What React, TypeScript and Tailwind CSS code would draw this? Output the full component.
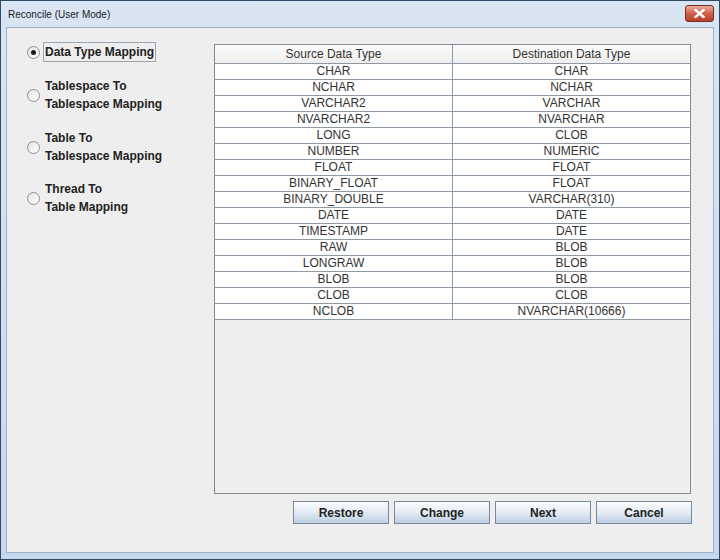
import React from "react";

const rows: [string, string][] = [
  ["CHAR", "CHAR"],
  ["NCHAR", "NCHAR"],
  ["VARCHAR2", "VARCHAR"],
  ["NVARCHAR2", "NVARCHAR"],
  ["LONG", "CLOB"],
  ["NUMBER", "NUMERIC"],
  ["FLOAT", "FLOAT"],
  ["BINARY_FLOAT", "FLOAT"],
  ["BINARY_DOUBLE", "VARCHAR(310)"],
  ["DATE", "DATE"],
  ["TIMESTAMP", "DATE"],
  ["RAW", "BLOB"],
  ["LONGRAW", "BLOB"],
  ["BLOB", "BLOB"],
  ["CLOB", "CLOB"],
  ["NCLOB", "NVARCHAR(10666)"],
];

const options = [
  { lines: ["Data Type Mapping"], selected: true, mt: "mt-[14px]" },
  { lines: ["Tablespace To", "Tablespace Mapping"], selected: false, mt: "mt-[14px]" },
  { lines: ["Table To", "Tablespace Mapping"], selected: false, mt: "mt-[14px]" },
  { lines: ["Thread To", "Table Mapping"], selected: false, mt: "mt-[13px]" },
];

const Radio = ({ checked }: { checked: boolean }) => (
  <div className="w-[13px] h-[13px] rounded-full border border-[#8e8f8f] bg-gradient-to-br from-[#e4e4e4] to-[#ffffff] flex items-center justify-center shrink-0">
    {checked && <div className="w-[5px] h-[5px] rounded-full bg-[#1a1a1a]" />}
  </div>
);

const Button = ({ label }: { label: string }) => (
  <button className="w-[96px] h-[23px] border border-[#7b8896] bg-gradient-to-b from-[#fbfcfe] via-[#e3ebf4] to-[#bccee3] text-[12px] font-bold text-[#222] leading-none">
    {label}
  </button>
);

export default function App() {
  return (
    <div className="w-[720px] h-[560px] flex flex-col border border-[#2f4b66] bg-gradient-to-b from-[#d9e5f3] to-[#c6d8ec] font-['Liberation_Sans',Arial,sans-serif] overflow-hidden">
      {/* title bar */}
      <div className="h-[26px] flex items-start shrink-0 pl-[7px]">
        <span className="mt-[8px] text-[10px] leading-[12px] text-[#1b1b1b]">Reconcile (User Mode)</span>
        <div className="ml-auto mr-[5px] mt-[4px] w-[29px] h-[17px] rounded-[3px] border border-[#7a2a1e] bg-gradient-to-b from-[#eab0a3] via-[#d0604b] to-[#b8412c] flex items-center justify-center">
          <svg width="11" height="9" viewBox="0 0 11 9">
            <path d="M1.5 1 L9.5 8 M9.5 1 L1.5 8" stroke="#ffffff" strokeWidth="2.4" strokeLinecap="square" />
          </svg>
        </div>
      </div>

      {/* content */}
      <div className="flex-1 mx-[5px] mb-[6px] bg-[#eeeeee] border border-[#9fb3c8] flex">
        {/* left radio group */}
        <div className="w-[207px] shrink-0 pl-[20px] flex flex-col">
          {options.map((o, i) => (
            <div key={i} className={`${o.mt} flex items-center gap-[3px]`}>
              <Radio checked={o.selected} />
              <div
                className={`border px-[1px] text-[12px] font-bold leading-[18px] text-[#222] ${
                  o.selected ? "border-[#9aa6b2]" : "border-transparent"
                }`}
              >
                {o.lines.map((l) => (
                  <div key={l}>{l}</div>
                ))}
              </div>
            </div>
          ))}
        </div>

        {/* right: table + buttons */}
        <div className="w-[478px] shrink-0 pt-[16px] flex flex-col">
          <div className="w-[477px] h-[450px] border border-[#7f8b97] bg-[#eeeeee] flex flex-col">
            <div className="flex h-[19px] border-b border-[#8f9aa5] bg-gradient-to-b from-[#fafafa] to-[#eeeeee] text-[12px] leading-[18px] text-[#333]">
              <div className="w-[238px] border-r border-[#8f9aa5] text-center">Source Data Type</div>
              <div className="flex-1 text-center">Destination Data Type</div>
            </div>
            {rows.map(([a, b], i) => (
              <div key={i} className="flex h-[16px] border-b border-[#8f9aa5] bg-white text-[12px] leading-[15px] text-[#333]">
                <div className="w-[238px] border-r border-[#8f9aa5] text-center">{a}</div>
                <div className="flex-1 text-center">{b}</div>
              </div>
            ))}
          </div>
          <div className="mt-[7px] flex justify-end gap-[5px]">
            <Button label="Restore" />
            <Button label="Change" />
            <Button label="Next" />
            <Button label="Cancel" />
          </div>
        </div>
      </div>
    </div>
  );
}
